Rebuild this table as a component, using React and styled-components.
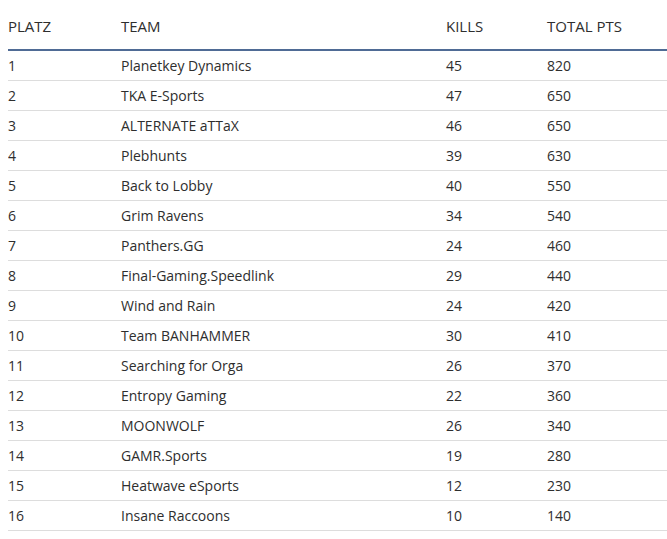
import React from "react";
import styled, { createGlobalStyle } from "styled-components";

const GlobalStyle = createGlobalStyle`
  body {
    margin: 8px 0 0 8px;
    background: #ffffff;
    font-family: "Open Sans", "Liberation Sans", sans-serif;
  }
`;

const Table = styled.table`
  width: 100%;
  border-collapse: separate;
  border-spacing: 0;
  font-size: 14px;
  color: #2e2e2e;
`;

const HeadCell = styled.th`
  text-align: left;
  font-weight: 400;
  font-size: 15px;
  line-height: 20px;
  padding: 8px 0 13px 0;
  border-bottom: 2px solid #4f6b95;
  width: ${(p) => p.$w || "auto"};
`;

const Cell = styled.td`
  line-height: 20px;
  padding: 5px 0 4px 0;
  border-bottom: 1px solid #dddddd;
`;

const rows = [
  [1, "Planetkey Dynamics", 45, 820],
  [2, "TKA E-Sports", 47, 650],
  [3, "ALTERNATE aTTaX", 46, 650],
  [4, "Plebhunts", 39, 630],
  [5, "Back to Lobby", 40, 550],
  [6, "Grim Ravens", 34, 540],
  [7, "Panthers.GG", 24, 460],
  [8, "Final-Gaming.Speedlink", 29, 440],
  [9, "Wind and Rain", 24, 420],
  [10, "Team BANHAMMER", 30, 410],
  [11, "Searching for Orga", 26, 370],
  [12, "Entropy Gaming", 22, 360],
  [13, "MOONWOLF", 26, 340],
  [14, "GAMR.Sports", 19, 280],
  [15, "Heatwave eSports", 12, 230],
  [16, "Insane Raccoons", 10, 140],
];

export default function App() {
  return (
    <>
      <GlobalStyle />
      <Table>
        <thead>
          <tr>
            <HeadCell $w="113px">PLATZ</HeadCell>
            <HeadCell $w="325px">TEAM</HeadCell>
            <HeadCell $w="101px">KILLS</HeadCell>
            <HeadCell>TOTAL PTS</HeadCell>
          </tr>
        </thead>
        <tbody>
          {rows.map(([p, t, k, pts]) => (
            <tr key={p}>
              <Cell>{p}</Cell>
              <Cell>{t}</Cell>
              <Cell>{k}</Cell>
              <Cell>{pts}</Cell>
            </tr>
          ))}
        </tbody>
      </Table>
    </>
  );
}
